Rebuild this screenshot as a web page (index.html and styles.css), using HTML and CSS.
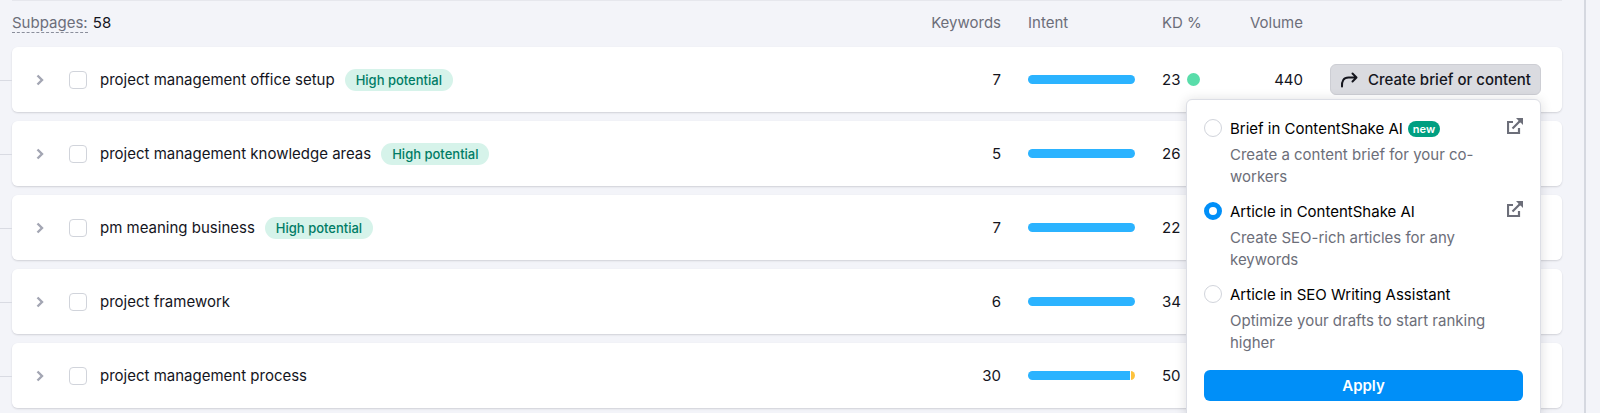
FILE: index.html
```html
<!DOCTYPE html>
<html lang="en">
<head>
    <meta charset="UTF-8">
    <meta name="viewport" content="width=device-width, initial-scale=1.0">
    <title>Subpages</title>
    <link rel="stylesheet" href="styles.css">
</head>
<body>
    <!-- Shared icons -->
    <svg class="icon-defs" aria-hidden="true">
        <symbol id="icon-chevron" viewBox="0 0 8 12">
            <path d="M1.500 1.500l4.500 4.500-4.500 4.500" fill="none" stroke="currentColor" stroke-width="2.400"/>
        </symbol>
        <symbol id="icon-arrow" viewBox="0 0 18 16">
            <path d="M2 14.500c-.3-5.500 1.500-9 6.500-9H16M12.500 1.500l4 4-4 4" fill="none" stroke="currentColor" stroke-width="2" stroke-linecap="round" stroke-linejoin="round"/>
        </symbol>
        <symbol id="icon-external" viewBox="0 0 16 16">
            <path d="M6 4H1v11h11v-5M12.500 3.500L5.500 10.500" fill="none" stroke="currentColor" stroke-width="2.200"/>
            <path d="M9 0h7v7l-2.200-2.200-1.800-.8-.8-1.800z" fill="currentColor"/>
        </symbol>
    </svg>

    <main class="panel">
        <table class="subpages">
            <colgroup>
                <col>
                <col class="col-keywords">
                <col class="col-intent">
                <col class="col-kd">
                <col class="col-volume">
                <col class="col-action">
            </colgroup>
            <thead>
                <tr>
                    <th><span class="hint">Subpages:</span> <span class="count">58</span></th>
                    <th class="num">Keywords</th>
                    <th>Intent</th>
                    <th>KD %</th>
                    <th class="num">Volume</th>
                    <td></td>
                </tr>
            </thead>
            <tbody>
                <tr>
                    <td>
                        <div class="page-name">
                            <button class="expand" aria-label="Expand"><svg><use href="#icon-chevron"/></svg></button>
                            <input type="checkbox" id="page1">
                            <label for="page1">project management office setup</label>
                            <span class="tag">High potential</span>
                        </div>
                    </td>
                    <td class="num">7</td>
                    <td><div class="intent"><span class="informational"></span></div></td>
                    <td><div class="kd">23 <span class="dot"></span></div></td>
                    <td class="num">440</td>
                    <td>
                        <div class="action">
                            <button class="create-btn"><svg><use href="#icon-arrow"/></svg>Create brief or content</button>
                            <!-- Create menu -->
                            <form class="menu">
                                <div class="option">
                                    <input type="radio" name="target" id="brief">
                                    <div class="option-text">
                                        <label for="brief">Brief in ContentShake AI</label><span class="new">new</span>
                                        <p>Create a content brief for your co-workers</p>
                                    </div>
                                    <a class="external" href="#" aria-label="Open"><svg><use href="#icon-external"/></svg></a>
                                </div>
                                <div class="option">
                                    <input type="radio" name="target" id="article" checked>
                                    <div class="option-text">
                                        <label for="article">Article in ContentShake AI</label>
                                        <p>Create SEO-rich articles for any keywords</p>
                                    </div>
                                    <a class="external" href="#" aria-label="Open"><svg><use href="#icon-external"/></svg></a>
                                </div>
                                <div class="option">
                                    <input type="radio" name="target" id="assistant">
                                    <div class="option-text">
                                        <label for="assistant">Article in SEO Writing Assistant</label>
                                        <p>Optimize your drafts to start ranking higher</p>
                                    </div>
                                </div>
                                <button type="button" class="apply-btn">Apply</button>
                            </form>
                        </div>
                    </td>
                </tr>
                <tr>
                    <td>
                        <div class="page-name">
                            <button class="expand" aria-label="Expand"><svg><use href="#icon-chevron"/></svg></button>
                            <input type="checkbox" id="page2">
                            <label for="page2">project management knowledge areas</label>
                            <span class="tag">High potential</span>
                        </div>
                    </td>
                    <td class="num">5</td>
                    <td><div class="intent"><span class="informational"></span></div></td>
                    <td>26</td>
                    <td></td>
                    <td></td>
                </tr>
                <tr>
                    <td>
                        <div class="page-name">
                            <button class="expand" aria-label="Expand"><svg><use href="#icon-chevron"/></svg></button>
                            <input type="checkbox" id="page3">
                            <label for="page3">pm meaning business</label>
                            <span class="tag">High potential</span>
                        </div>
                    </td>
                    <td class="num">7</td>
                    <td><div class="intent"><span class="informational"></span></div></td>
                    <td>22</td>
                    <td></td>
                    <td></td>
                </tr>
                <tr>
                    <td>
                        <div class="page-name">
                            <button class="expand" aria-label="Expand"><svg><use href="#icon-chevron"/></svg></button>
                            <input type="checkbox" id="page4">
                            <label for="page4">project framework</label>
                        </div>
                    </td>
                    <td class="num">6</td>
                    <td><div class="intent"><span class="informational"></span></div></td>
                    <td>34</td>
                    <td></td>
                    <td></td>
                </tr>
                <tr>
                    <td>
                        <div class="page-name">
                            <button class="expand" aria-label="Expand"><svg><use href="#icon-chevron"/></svg></button>
                            <input type="checkbox" id="page5">
                            <label for="page5">project management process</label>
                        </div>
                    </td>
                    <td class="num">30</td>
                    <td><div class="intent"><span class="informational"></span><span class="commercial"></span></div></td>
                    <td>50</td>
                    <td></td>
                    <td></td>
                </tr>
            </tbody>
        </table>
    </main>
</body>
</html>
```
FILE: styles.css
```css
* {
    box-sizing: border-box;
}
body {
    margin: 0;
    height: 100vh;
    overflow: hidden;
    background-color: #f3f4f9;
    color: #14151d;
    font-family: Inter, "Liberation Sans", sans-serif;
    font-size: 15px;
    line-height: 22px;
}
button, input {
    font: inherit;
    margin: 0;
}
.icon-defs {
    position: absolute;
    width: 0;
    height: 0;
}
.panel {
    min-height: 100vh;
    margin-right: 14px;
    padding: 0 22px 0 12px;
    border-right: 2px solid #d5d8e0;
}

/* Subpages table */
.subpages {
    width: 100%;
    table-layout: fixed;
    border-spacing: 0 9px;
    border-top: 1px solid #e6e7ed;
}
.col-keywords { width: 120px; }
.col-intent { width: 134px; }
.col-kd { width: 87px; }
.col-volume { width: 81px; }
.col-action { width: 232px; }

th {
    height: 28px;
    padding: 0 27px 2px 0;
    color: #6c6e79;
    font-weight: 400;
    text-align: left;
}
.hint {
    border-bottom: 1px dashed #8a8e9b;
}
.count {
    margin-left: 1px;
    color: #14151d;
}
.subpages .num {
    text-align: right;
}
tbody tr {
    border-radius: 6px;
    box-shadow: 0 1px 2px rgba(25, 27, 35, 0.16);
}
tbody td {
    height: 65px;
    padding: 0 27px 0 0;
    background-color: #fff;
}
tbody td:first-child {
    position: relative;
    padding-left: 20px;
    border-radius: 6px 0 0 6px;
}
tbody td:last-child {
    padding-right: 21px;
    border-radius: 0 6px 6px 0;
}
/* branch line coming from the parent page */
tbody td:first-child::before {
    content: "";
    position: absolute;
    left: -12px;
    top: 50%;
    width: 12px;
    height: 1px;
    background-color: #d9dbe3;
}

.page-name {
    display: flex;
    align-items: center;
}
.expand {
    display: flex;
    margin-right: 21px;
    padding: 4px;
    border: none;
    background: none;
    color: #a3a6b3;
    cursor: pointer;
}
.expand svg {
    width: 8px;
    height: 12px;
}
input[type="checkbox"] {
    appearance: none;
    width: 18px;
    height: 18px;
    margin-right: 13px;
    border: 1px solid #d1d4db;
    border-radius: 4px;
    background-color: #fff;
}
.tag {
    margin-left: 10px;
    padding: 0 11px;
    border-radius: 11px;
    background-color: #d6f3ea;
    color: #007c65;
    font-size: 13px;
    font-weight: 500;
}

.intent {
    display: flex;
    gap: 1px;
    height: 9px;
    border-radius: 5px;
    overflow: hidden;
}
.informational {
    flex: 1;
    background-color: #2bb3ff;
}
.commercial {
    width: 4px;
    background-color: #fdc23c;
}
.kd {
    display: flex;
    align-items: center;
    gap: 7px;
}
.dot {
    width: 13px;
    height: 13px;
    border-radius: 50%;
    background-color: #59ddaa;
}

/* Create button and its menu */
.action {
    position: relative;
}
.create-btn {
    display: flex;
    align-items: center;
    justify-content: center;
    gap: 10px;
    width: 100%;
    height: 31px;
    padding: 0;
    border: 1px solid #cdced4;
    border-radius: 6px;
    background-color: #dadbe0;
    color: #14151d;
    font-weight: 500;
    white-space: nowrap;
    cursor: pointer;
}
.create-btn svg {
    width: 18px;
    height: 16px;
}
.menu {
    position: absolute;
    z-index: 1;
    top: 35px;
    right: 0;
    width: 355px;
    padding: 18px 17px;
    border: 1px solid #dcdee5;
    border-radius: 6px;
    background-color: #fff;
    color: #000;
    box-shadow: 0 1px 12px rgba(25, 27, 35, 0.15);
}
.option {
    display: flex;
    align-items: flex-start;
    margin-bottom: 13px;
}
input[type="radio"] {
    appearance: none;
    flex: none;
    width: 18px;
    height: 18px;
    margin: 1px 8px 0 0;
    border: 1px solid #d1d4db;
    border-radius: 50%;
    background-color: #fff;
}
input[type="radio"]:checked {
    border: 5px solid #008ff8;
}
.option-text {
    flex: 1;
}
.option-text p {
    margin: 4px 0 0;
    color: #6c6e79;
}
.new {
    display: inline-block;
    margin-left: 5px;
    padding: 0 5px;
    border-radius: 8px;
    background-color: #009f81;
    color: #fff;
    font-size: 11px;
    font-weight: 600;
    line-height: 16px;
    vertical-align: 1px;
}
.external {
    display: flex;
    color: #6c6e79;
}
.external svg {
    width: 16px;
    height: 16px;
}
.apply-btn {
    width: 100%;
    height: 31px;
    margin-top: 3px;
    padding: 0;
    border: none;
    border-radius: 6px;
    background-color: #008ff8;
    color: #fff;
    font-weight: 600;
    cursor: pointer;
}
```
